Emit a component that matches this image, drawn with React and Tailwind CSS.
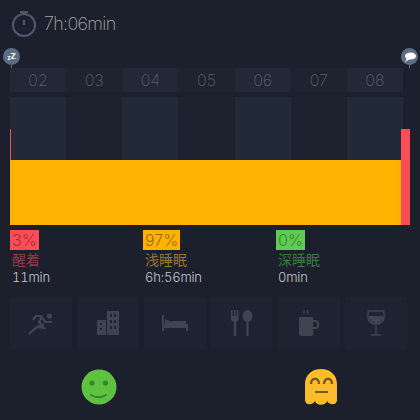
const hours = ["02", "03", "04", "05", "06", "07", "08"];

const stats = [
  { pct: "3%", label: "醒着", time: "11min", badge: "bg-[#fb4d57] text-[#a92b37]", text: "text-[#8f3d48]" },
  { pct: "97%", label: "浅睡眠", time: "6h:56min", badge: "bg-[#ffb300] text-[#94690c]", text: "text-[#997637]" },
  { pct: "0%", label: "深睡眠", time: "0min", badge: "bg-[#62c956] text-[#2f8f2a]", text: "text-[#3a7a42]" },
];

const ICON = "#3f4450";

function Runner() {
  return (
    <svg width="26" height="23" viewBox="0 0 26 23" fill="none" stroke={ICON} strokeWidth="2.2">
      <circle cx="21.5" cy="4" r="2.6" fill={ICON} stroke="none" />
      <path d="M1 22l8-7 7 1-5-6 3-5 3 5h7" />
      <path d="M14 4H8L5 8M9 15l7-3" />
    </svg>
  );
}

function Building() {
  return (
    <svg width="24" height="24" viewBox="0 0 24 24" fill={ICON}>
      <path d="M11 0h12v24H11z" />
      <path d="M1 9h9v15H1z" />
      <path d="M14 3h2v3h-2zM18 3h2v3h-2zM14 9h2v3h-2zM18 9h2v3h-2zM14 15h2v3h-2zM18 15h2v3h-2zM4 12h2v2H4zM4 17h2v2H4z" fill="#1e2431" />
    </svg>
  );
}

function BedIcon() {
  return (
    <svg width="26" height="16" viewBox="0 0 26 16" fill={ICON}>
      <path d="M0 0h2v16H0z" />
      <path d="M2 9h22v4H2z" />
      <path d="M3 4l7 3v2H3z" />
      <path d="M10 6h14v3H10zM23 9h3v7h-2v-3h-1z" />
    </svg>
  );
}

function Cutlery() {
  return (
    <svg width="22" height="26" viewBox="0 0 22 26" fill={ICON}>
      <path d="M0 0h1.6v6h1.4V0h1.6v6h1.4V0h1.6v9c0 1.5-1 2.5-2.4 2.7V26H2.8V11.7C1 11.5 0 10.5 0 9z" />
      <ellipse cx="16.5" cy="6" rx="5" ry="6" />
      <path d="M15.4 10h2.2v16h-2.2z" />
    </svg>
  );
}

function Mug() {
  return (
    <svg width="20" height="26" viewBox="0 0 20 26" fill="none">
      <path d="M0 7h14v17a2 2 0 0 1-2 2H2a2 2 0 0 1-2-2z" fill={ICON} />
      <path d="M14 11h2.5a2.5 2.5 0 0 1 2.5 2.5v2a2.5 2.5 0 0 1-2.5 2.5H14" stroke={ICON} strokeWidth="2" />
      <path d="M5 0v4M8.5 0v4" stroke={ICON} strokeWidth="1.2" />
    </svg>
  );
}

function WineGlass() {
  return (
    <svg width="18" height="26" viewBox="0 0 18 26" fill="none">
      <path d="M1.5 1h15c1.5 6 1 13-7.5 13S0 7 1.5 1z" stroke={ICON} strokeWidth="1.6" />
      <path d="M2 6h14c0 5-2 7-7 7S2 11 2 6z" fill={ICON} />
      <path d="M9 14v11M4 25h10" stroke={ICON} strokeWidth="1.4" />
    </svg>
  );
}

function Smiley() {
  return (
    <svg width="36" height="36" viewBox="0 0 36 36">
      <circle cx="18" cy="18" r="17.5" fill="#5ec13f" />
      <circle cx="11" cy="14" r="2.6" fill="#2f8a2a" />
      <circle cx="24.5" cy="14" r="2.6" fill="#2f8a2a" />
      <path d="M10 26c4 3 11 3 15 0" fill="none" stroke="#2f8a2a" strokeWidth="2" strokeLinecap="round" />
    </svg>
  );
}

function Ghost() {
  return (
    <svg width="32" height="36" viewBox="0 0 32 36">
      <path
        d="M0 15C0 6 7 0 16 0s16 6 16 15v16c0 5-7 6-10 1-1 5-11 5-12 0-3 5-10 4-10-1z"
        fill="#fbbd2c"
      />
      <path d="M6 15c0-7 8-7 8 0M19 15c0-7 8-7 8 0" fill="none" stroke="#7a5a12" strokeWidth="2.4" />
      <path d="M10 23h13" stroke="#7a5a12" strokeWidth="2" />
    </svg>
  );
}

function Marker({ children }) {
  return (
    <div className="flex flex-col items-center">
      <div className="w-[17px] h-[17px] rounded-full bg-[#5d6c82] flex items-center justify-center">{children}</div>
      <div className="w-[1px] h-[3px] bg-[#5d6c82]" />
    </div>
  );
}

function Cell({ children }) {
  return <div className="w-[62px] h-[52px] bg-[#1d2330] flex items-center justify-center">{children}</div>;
}

export default function App() {
  return (
    <div
      className="w-[420px] h-[420px] overflow-hidden bg-[#1c202c] flex flex-col"
      style={{ fontFamily: '"Inter", "Noto Sans CJK SC", sans-serif' }}
    >
      {/* durasi tidur */}
      <div className="flex items-center gap-[7px] pl-[11px] pt-[7px] h-[40px]">
        <svg width="26" height="27" viewBox="0 0 26 27" fill="none" stroke="#4d5a6e" strokeWidth="2">
          <circle cx="13" cy="15" r="11" />
          <path d="M9 2h8M13 10v5" />
        </svg>
        <span className="text-[18px] font-extralight text-[#a6a8ae] tracking-[-0.7px]">7h:06min</span>
      </div>

      <div className="flex justify-between pl-[3px] pr-[2px] h-[20px] mt-[8px]">
        <Marker>
          <div className="flex items-start text-white font-bold leading-none">
            <span className="text-[6px] mt-[2px]">z</span>
            <span className="text-[8px] -mt-[1px]">Z</span>
          </div>
        </Marker>
        <Marker>
          <svg width="12" height="10" viewBox="0 0 12 10" fill="#fff">
            <ellipse cx="6.5" cy="4" rx="5.5" ry="3.6" />
            <path d="M3 6L1 10l5-3z" />
          </svg>
        </Marker>
      </div>

      {/* grafik jam */}
      <div className="ml-[10px] w-[393px] grid grid-cols-7">
        {hours.map((h, i) => (
          <div
            key={h}
            className={`h-[24px] flex items-center justify-center text-[16px] font-extralight text-[#5a606c] ${
              i % 2 === 0 ? "bg-[#222835]" : "bg-[#1e232f]"
            }`}
          >
            {h}
          </div>
        ))}
      </div>
      <div className="relative ml-[10px] w-[400px] mt-[5px] h-[128px]">
        <div className="w-[393px] h-full grid grid-cols-7">
          {hours.map((h, i) => (
            <div key={h} className={i % 2 === 0 ? "bg-[#222a38]" : "bg-[#1e222e]"} />
          ))}
        </div>
        <div className="absolute left-0 bottom-0 w-[391px] h-[65px] bg-[#ffb300]" />
        <div className="absolute left-0 bottom-[65px] w-[1px] h-[31px] bg-[#fb4d57]" />
        <div className="absolute left-[391px] bottom-0 w-[9px] h-[96px] bg-[#fb4d57]" />
      </div>

      {/* ringkasan */}
      <div className="flex pl-[10px] mt-[5px] h-[62px]">
        {stats.map((s) => (
          <div key={s.label} className="w-[133px] flex flex-col items-start">
            <div className={`h-[20px] px-[2px] flex items-center text-[16px] font-light ${s.badge}`}>{s.pct}</div>
            <div className={`text-[14px] leading-[18px] mt-[1px] px-[2px] ${s.text}`}>{s.label}</div>
            <div className="text-[13px] leading-[17px] px-[2px] font-light tabular-nums tracking-[-0.2px] text-[#c4c6cc]">
              {s.time}
            </div>
          </div>
        ))}
      </div>

      {/* aktivitas */}
      <div className="flex justify-between pl-[10px] pr-[13px] mt-[5px]">
        <Cell>
          <Runner />
        </Cell>
        <Cell>
          <Building />
        </Cell>
        <Cell>
          <BedIcon />
        </Cell>
        <Cell>
          <Cutlery />
        </Cell>
        <Cell>
          <Mug />
        </Cell>
        <Cell>
          <WineGlass />
        </Cell>
      </div>

      <div className="flex mt-[20px]">
        <div className="ml-[81px]">
          <Smiley />
        </div>
        <div className="ml-[188px]">
          <Ghost />
        </div>
      </div>
    </div>
  );
}
